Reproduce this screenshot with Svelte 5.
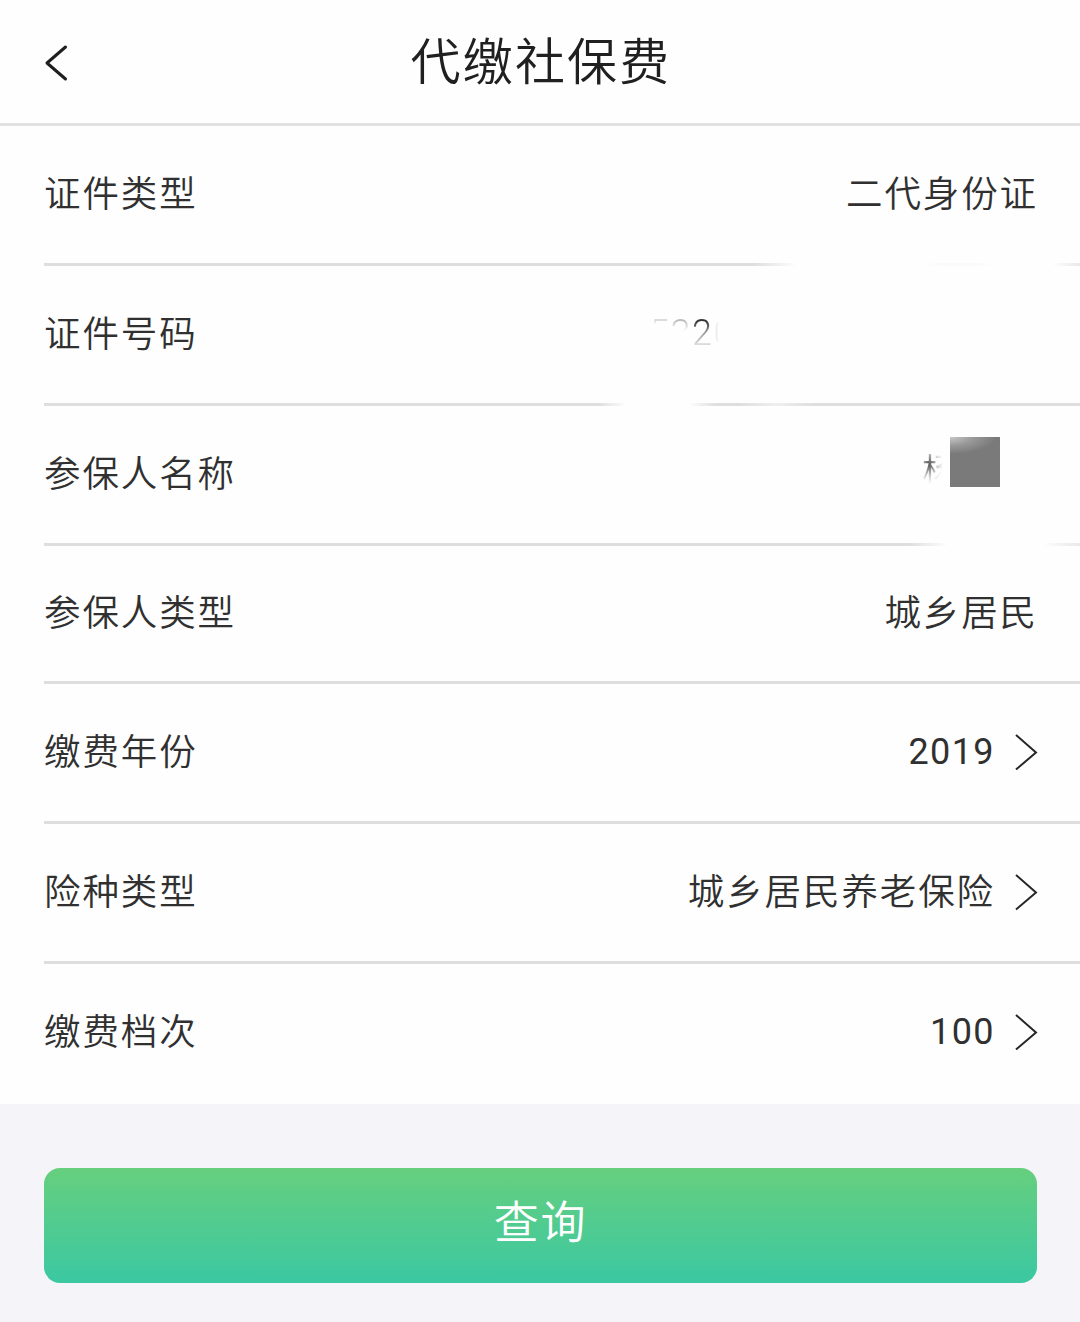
<script lang="ts">
  type Row = {
    label: string;
    value?: string;
    kind?: 'number' | 'name';
    picker?: boolean;
    line?: string;
    short?: boolean;
  };

  const rows: Row[] = [
    { label: '证件类型', value: '二代身份证', line: 'fade-a' },
    { label: '证件号码', kind: 'number', line: 'fade-b' },
    { label: '参保人名称', kind: 'name', line: 'fade-c' },
    { label: '参保人类型', value: '城乡居民', short: true },
    { label: '缴费年份', value: '2019', picker: true },
    { label: '险种类型', value: '城乡居民养老保险', picker: true },
    { label: '缴费档次', value: '100', picker: true, line: 'none' },
  ];

  const isNumeric = (s = '') => /^\d+$/.test(s);
</script>

<div class="page">
  <header>
    <button class="back" aria-label="返回">
      <svg width="24" height="38" viewBox="0 0 24 38">
        <path d="M21.5 3 3 19 21.5 35" fill="none" stroke="#1e1e1e" stroke-width="3" stroke-linecap="round" stroke-linejoin="round" />
      </svg>
    </button>
    <h1>代缴社保费</h1>
  </header>

  <div class="list">
    {#each rows as row}
      <div class="row" class:short={row.short}>
        <div class="cells">
          <span class="label">{row.label}</span>
          {#if row.kind === 'number'}
            <span class="id-no"><i class="d1">5</i><i class="d2">3</i><i class="d3">2</i><i class="d4">0</i></span>
          {:else if row.kind === 'name'}
            <span class="person">杨</span>
            <span class="block"></span>
          {:else}
            <span class="value" class:num={isNumeric(row.value)}>{row.value}</span>
          {/if}
          {#if row.picker}
            <svg class="arrow" width="24" height="38" viewBox="0 0 24 38">
              <path d="M2 2 22 19.5 2 36.5" fill="none" stroke="#262626" stroke-width="2" />
            </svg>
          {/if}
        </div>
        <div class="line {row.line ?? ''}"></div>
      </div>
    {/each}
  </div>

  <div class="footer">
    <button class="submit">查询</button>
  </div>
</div>

<style>
  :global(body) {
    background: #f4f4f9;
  }
  .page {
    width: 1080px;
    height: 1322px;
    overflow: hidden;
    background: #f4f4f9;
    color: #303030;
    font-family: Roboto, 'Noto Sans CJK SC', sans-serif;
    font-weight: 350;
  }
  button {
    border: none;
    padding: 0;
    background: none;
    font: inherit;
  }
  header {
    box-sizing: border-box;
    height: 126px;
    display: grid;
    grid-template-columns: 200px 1fr 200px;
    align-items: center;
    background: #fefefe;
    border-bottom: 3px solid #e2e2e2;
  }
  .back {
    display: flex;
    justify-self: start;
    margin: 3px 0 0 44px;
  }
  h1 {
    margin: 3px 0 0 2px;
    text-align: center;
    font-size: 50px;
    line-height: 72px;
    font-weight: 350;
    letter-spacing: 2.2px;
    color: #202020;
  }
  .list {
    background: #fefefe;
  }
  .row {
    display: flex;
    flex-direction: column;
    height: 140px;
    margin-left: 44px;
  }
  .row.short {
    height: 138px;
  }
  .cells {
    position: relative;
    flex: 1;
    display: flex;
    align-items: center;
    justify-content: space-between;
    padding-right: 42px;
    font-size: 36.5px;
    line-height: 52px;
    letter-spacing: 1.9px;
  }
  .value {
    margin-left: auto;
  }
  .value.num {
    margin-bottom: 2px;
    font-size: 36px;
    font-weight: 400;
    letter-spacing: 1.4px;
  }
  .arrow {
    margin: 0 0 1px 19px;
  }
  .line {
    height: 3px;
    background: #dedede;
  }
  .none {
    background: none;
  }
  .fade-a {
    mask-image: linear-gradient(90deg, #000 710px, transparent 753px, transparent 880px, #0002 900px, #0002 930px, transparent 950px, transparent 1008px, #000a 1036px);
  }
  .fade-b {
    mask-image: linear-gradient(90deg, #000 555px, transparent 582px, transparent 645px, #000 672px, #000 695px, #0007 732px, #000 770px);
  }
  .fade-c {
    mask-image: linear-gradient(90deg, #000 865px, transparent 904px, transparent 998px, #000a 1036px);
  }

  /* remains of the rubbed-out identity number */
  .id-no {
    margin: 0 303px 3px 0;
    font-size: 36px;
    letter-spacing: 1.5px;
  }
  .id-no i {
    display: inline-block;
    font-style: normal;
    color: transparent;
    background-clip: text;
  }
  .d1 {
    background-image: linear-gradient(#0002 14px, transparent 17px);
  }
  .d2 {
    background-image: linear-gradient(#0004 13px, transparent 24px);
  }
  .d3 {
    background-image: linear-gradient(#333 14px, #999 25px, #ddd 38px);
  }
  .d4 {
    background-image: linear-gradient(90deg, #0001 3px, transparent 5px);
  }

  /* covered name */
  .person {
    position: absolute;
    left: 878px;
    top: 41px;
    mask-image: radial-gradient(ellipse 14px 20px at 7px 17px, #000b 10%, #0003 65%, transparent);
  }
  .block {
    position: absolute;
    left: 906px;
    top: 31px;
    width: 50px;
    height: 50px;
    background: radial-gradient(ellipse 46px 17px at 0 0, #c8c8c8, #999 50%, #7a7a7a);
  }

  .footer {
    padding: 64px 43px 39px 44px;
  }
  .submit {
    display: block;
    width: 100%;
    height: 115px;
    padding-bottom: 12px;
    border-radius: 16px;
    background: linear-gradient(#66cf7e, #3bc8a2);
    color: #fff;
    font-size: 45px;
    letter-spacing: 1.8px;
  }
</style>
